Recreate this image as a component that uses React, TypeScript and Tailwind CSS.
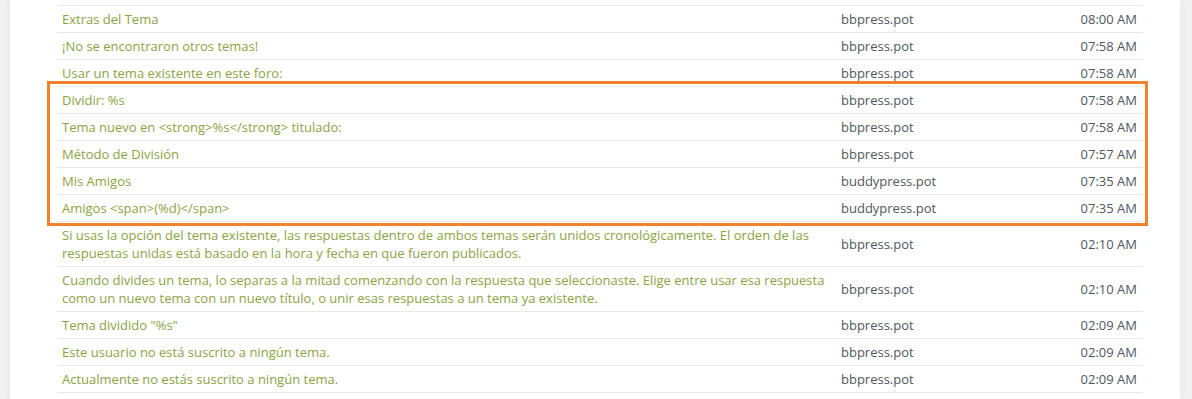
import React from "react";

type Row = { text: string; file: string; time: string };

const rows: Row[] = [
  { text: "Extras del Tema", file: "bbpress.pot", time: "08:00 AM" },
  { text: "¡No se encontraron otros temas!", file: "bbpress.pot", time: "07:58 AM" },
  { text: "Usar un tema existente en este foro:", file: "bbpress.pot", time: "07:58 AM" },
  { text: "Dividir: %s", file: "bbpress.pot", time: "07:58 AM" },
  { text: "Tema nuevo en <strong>%s</strong> titulado:", file: "bbpress.pot", time: "07:58 AM" },
  { text: "Método de División", file: "bbpress.pot", time: "07:57 AM" },
  { text: "Mis Amigos", file: "buddypress.pot", time: "07:35 AM" },
  { text: "Amigos <span>(%d)</span>", file: "buddypress.pot", time: "07:35 AM" },
  {
    text: "Si usas la opción del tema existente, las respuestas dentro de ambos temas serán unidos cronológicamente. El orden de las respuestas unidas está basado en la hora y fecha en que fueron publicados.",
    file: "bbpress.pot",
    time: "02:10 AM",
  },
  {
    text: "Cuando divides un tema, lo separas a la mitad comenzando con la respuesta que seleccionaste. Elige entre usar esa respuesta como un nuevo tema con un nuevo título, o unir esas respuestas a un tema ya existente.",
    file: "bbpress.pot",
    time: "02:10 AM",
  },
  { text: 'Tema dividido "%s"', file: "bbpress.pot", time: "02:09 AM" },
  { text: "Este usuario no está suscrito a ningún tema.", file: "bbpress.pot", time: "02:09 AM" },
  { text: "Actualmente no estás suscrito a ningún tema.", file: "bbpress.pot", time: "02:09 AM" },
];

export default function App() {
  return (
    <div
      className="min-h-[399px] bg-[#f1f1f1] pl-[10px] pr-[12px] text-[13px] leading-[18px]"
      style={{ fontFamily: '"Open Sans", "Noto Sans", sans-serif' }}
    >
      <div className="min-h-[399px] w-[1170px] bg-white pt-[5px] pl-[47px] shadow-[0_0_8px_rgba(0,0,0,0.06)]">
        <div className="relative w-[1086px] border-t border-[#e8e8e5]">
          {rows.map((r, i) => (
            <div key={i} className="flex border-b border-[#e8e8e5]">
              <div className="w-[779px] shrink-0 py-[4px] pl-[5px] pr-[8px] text-[#8ca345]">{r.text}</div>
              <div className="flex flex-1 items-center py-[4px] pl-[5px] text-[#50575e]">{r.file}</div>
              <div className="flex items-center py-[4px] pr-[6px] text-right text-[#50575e]">{r.time}</div>
            </div>
          ))}
          <div className="pointer-events-none absolute left-[-10px] top-[75px] h-[145px] w-[1101px] border-[3px] border-[#f5822a]" />
        </div>
      </div>
    </div>
  );
}
